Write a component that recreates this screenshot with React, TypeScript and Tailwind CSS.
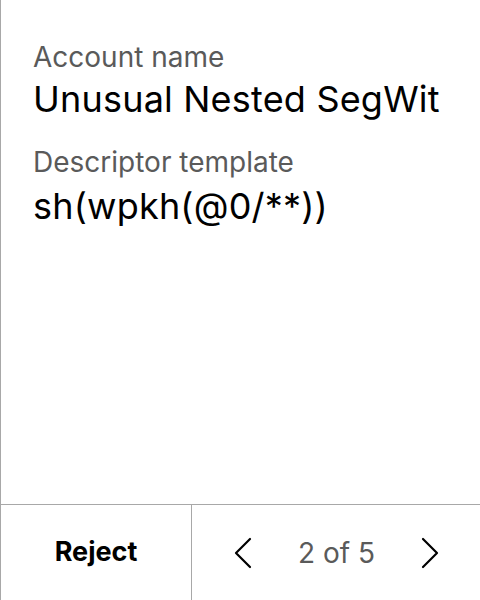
import React from 'react';

function Chevron({ dir }: { dir: 'left' | 'right' }) {
  return (
    <svg width="18" height="32" viewBox="0 0 18 32" fill="none" stroke="#000" strokeWidth="2.2" strokeLinecap="round" strokeLinejoin="round">
      {dir === 'left' ? <path d="M16 2L2 16l14 14" /> : <path d="M2 2l14 14L2 30" />}
    </svg>
  );
}

export default function App() {
  return (
    <div className="w-[480px] h-[600px] bg-white flex flex-col border-l border-[#a8a8a8] text-black" style={{ fontFamily: 'Inter, sans-serif' }}>
      <div className="flex-1 px-[32px] pt-[41px]">
        <div className="text-[28px] leading-[32px] text-[#5a5a5a]">Account name</div>
        <div className="text-[36px] leading-[44px] mt-[4px] tracking-[0.2px]">Unusual Nested SegWit</div>
        <div className="text-[28px] leading-[32px] text-[#5a5a5a] mt-[25px]">Descriptor template</div>
        <div className="text-[36px] leading-[44px] mt-[6px] tracking-[0.2px]">sh(wpkh(@0/**))</div>
      </div>
      <div className="h-[96px] border-t border-[#a8a8a8] flex">
        <div className="w-[191px] border-r border-[#a8a8a8] flex items-center justify-center text-[27px] font-bold">
          Reject
        </div>
        <div className="flex-1 flex items-center justify-between pl-[42px] pr-[41px]">
          <Chevron dir="left" />
          <span className="text-[28px] text-[#5a5a5a]">2 of 5</span>
          <Chevron dir="right" />
        </div>
      </div>
    </div>
  );
}
